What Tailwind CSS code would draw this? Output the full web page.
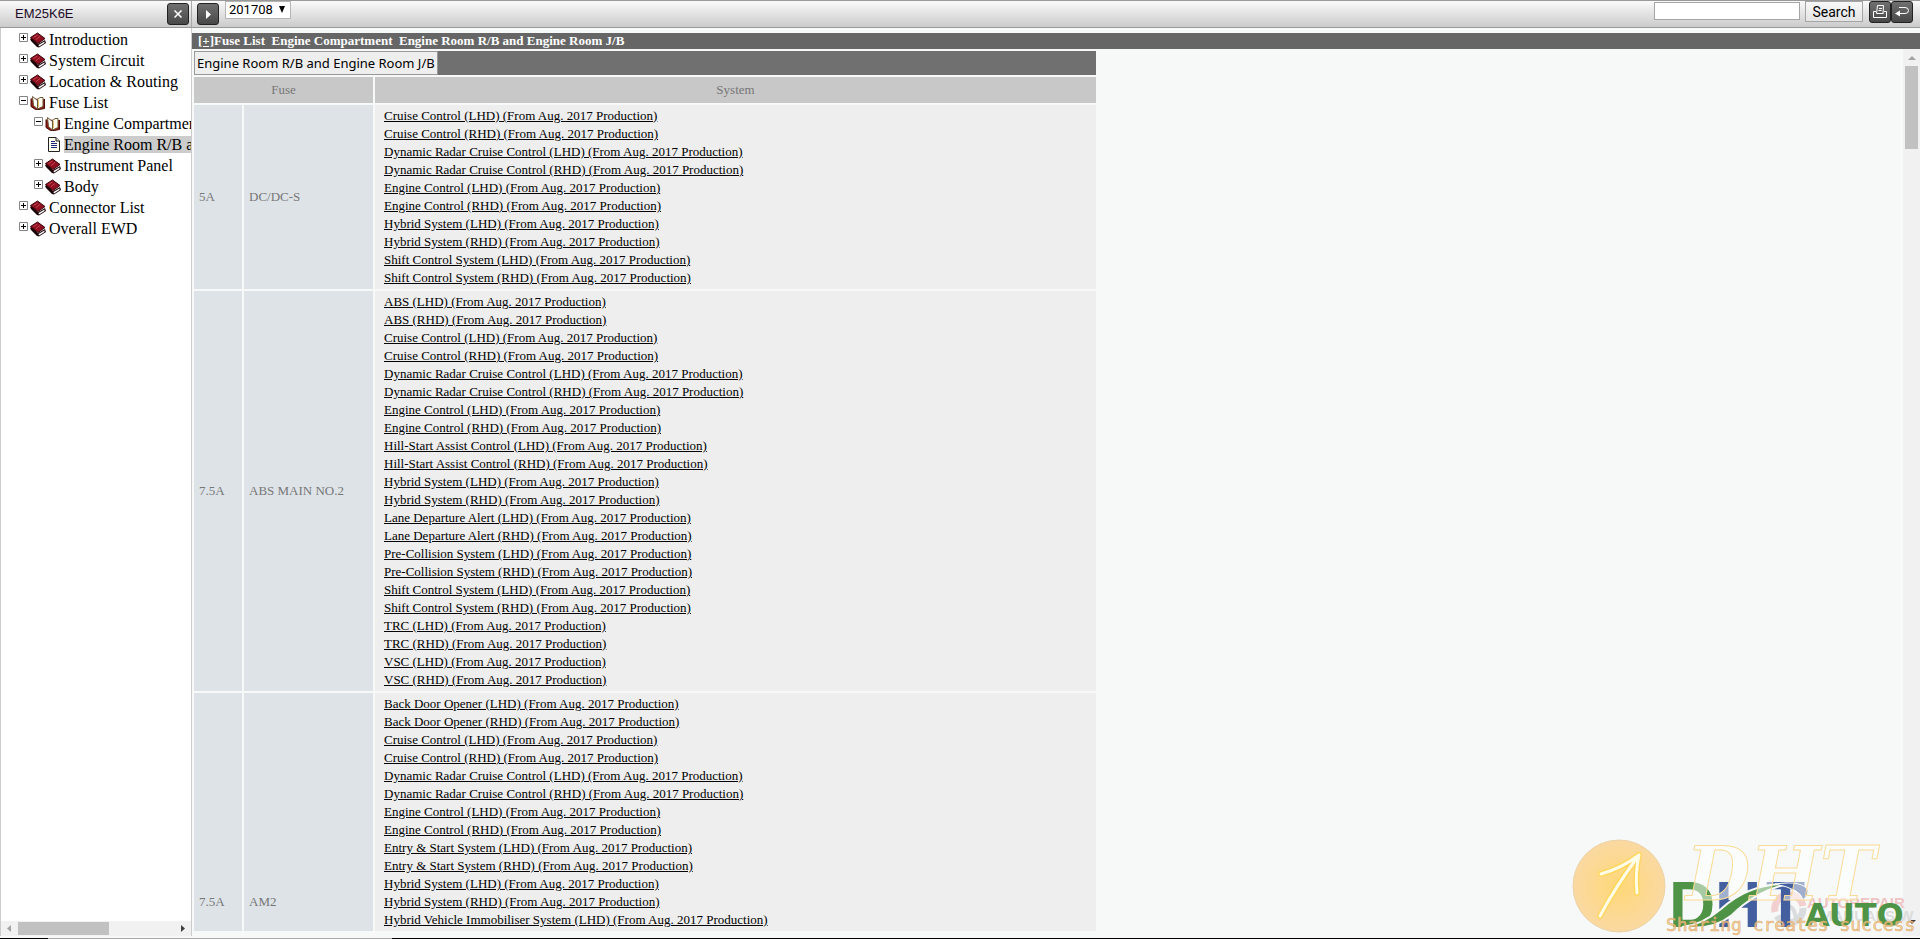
<!DOCTYPE html>
<html lang="en">
  <head>
    <meta charset="UTF-8" />
    <meta name="viewport" content="width=device-width, initial-scale=1.0" />
    <title>EM25K6E</title>
    <script src="https://cdn.jsdelivr.net/npm/@tailwindcss/browser@4"></script>
  </head>
  <body class="h-screen overflow-hidden flex flex-col bg-[#f7f9f9] text-black font-['Liberation_Serif',serif]">
    <!-- tree icons -->
    <svg class="hidden">
      <symbol id="icon-closed" viewBox="0 0 16 16">
        <path d="M0 7 L2 5.500 L8 12 L15 8 L16 11 L9 15.500 L7 15 L1 9Z" fill="#1c0508" />
        <path d="M0.500 5.500 L7.500 1 L15 6.500 L8 11.500Z" fill="#8f1020" stroke="#3a0509" />
        <path d="M3.500 5.500 L7.500 3 M6 7.500 L10 4.500" stroke="#c8454f" />
        <path d="M8.500 13 L14.500 9.500 V11 L9 14.500Z" fill="#fff" />
      </symbol>
      <symbol id="icon-open" viewBox="0 0 16 16">
        <path d="M1 3.500 V11.500 L5.500 14.500 H9 L14.500 13.500 V4" fill="#8f1a14" stroke="#4a0d0a" />
        <path d="M2.500 1.500 L3.500 10.500 L7.500 14 V5.500Z" fill="#fff" stroke="#6b5836" />
        <path d="M7.500 14 V4.500 L10 2.500 H13 V11.500Z" fill="#fffdf0" stroke="#6b5836" />
        <path d="M8.500 5 V12" stroke="#e0c070" />
      </symbol>
      <symbol id="icon-page" viewBox="0 0 12 15">
        <path d="M0.500 0.500 H8 L11.500 4 V14.500 H0.500Z" fill="#fffff0" stroke="#222" />
        <path d="M8 0.500 V4 H11.500" fill="#ddd" stroke="#222" />
        <path d="M3 4.500 H7 M3 6.500 H9 M3 8.500 H9 M3 10.500 H9" stroke="#1b2a80" />
      </symbol>
      <symbol id="icon-plus" viewBox="0 0 9 9">
        <path d="M0.500 0.500 H8.500 V8.500 H0.500Z" fill="#fff" stroke="#848484" />
        <path d="M2 4.500 H7 M4.500 2 V7" stroke="#000" />
      </symbol>
      <symbol id="icon-minus" viewBox="0 0 9 9">
        <path d="M0.500 0.500 H8.500 V8.500 H0.500Z" fill="#fff" stroke="#848484" />
        <path d="M2 4.500 H7" stroke="#000" />
      </symbol>
    </svg>

    <!-- toolbar -->
    <header class="h-7 shrink-0 flex border-t border-b border-[#999] bg-linear-to-b from-[#fafafa] to-[#cbcbcb]">
      <div class="w-48 shrink-0 flex items-start justify-between pl-[15px] pr-0.5 pt-0.5 border-r border-[#aaa]">
        <span class="text-[13px] leading-[22px] text-[#1c0a28] font-['Liberation_Sans',sans-serif]">EM25K6E</span>
        <button aria-label="Close" class="size-[22px] grid place-items-center rounded-[3px] border border-[#222] bg-linear-to-b from-[#707070] to-[#484848]">
          <svg class="size-2" viewBox="0 0 8 8"><path d="M0.500 0.500 L7.500 7.500 M7.500 0.500 L0.500 7.500" stroke="#fff" stroke-width="1.500" /></svg>
        </button>
      </div>
      <div class="grow flex items-start pl-[5px] pr-[7px]">
        <button aria-label="Next" class="mt-0.5 size-[22px] grid place-items-center rounded-[3px] border border-[#222] bg-linear-to-b from-[#707070] to-[#484848]">
          <svg class="w-[5px] h-[9px]" viewBox="0 0 5 9"><path d="M0 0 L5 4.500 L0 9Z" fill="#fff" /></svg>
        </button>
        <div class="relative ml-1.5">
          <select aria-label="Production date" class="block appearance-none w-[66px] h-[18px] pl-[3px] border border-[#b5b5b5] bg-white text-[13px] leading-4 font-[Roboto,sans-serif]">
            <option>201708</option>
          </select>
          <svg class="absolute right-[6px] top-[5px] w-[6px] h-[7px] pointer-events-none" viewBox="0 0 6 7"><path d="M0 0 H6 L3 7Z" fill="#000" /></svg>
        </div>
        <form class="ml-auto flex items-start">
          <input type="text" aria-label="Search text" class="mt-px w-[146px] h-[18px] px-1 border border-[#a5a5a5] bg-white text-[13px]" />
          <button type="button" class="ml-[5px] w-[58px] h-[21px] border border-[#a5a5a5] bg-linear-to-b from-[#f8f8f8] to-[#e4e4e4] text-sm leading-[18px] font-[Roboto,sans-serif]">Search</button>
        </form>
        <button aria-label="Print" class="ml-1.5 size-[22px] grid place-items-center rounded-[3px] border border-[#222] bg-linear-to-b from-[#707070] to-[#484848]">
          <svg class="w-3.5 h-3.5" viewBox="0 0 14 14" fill="none" stroke="#fff"><path d="M3.500 8.500 L4.500 0.500 H10.500 L10 8.500 M3.500 8.500 H10.500 M3 6.500 H0.500 V12.500 H13.500 V6.500 H11 M6 3.500 H9 M5.500 5.500 H8.500" /></svg>
        </button>
        <button aria-label="Back" class="size-[22px] grid place-items-center rounded-[3px] border border-[#222] bg-linear-to-b from-[#707070] to-[#484848]">
          <svg class="w-3.5 h-2.5" viewBox="0 0 14 10" fill="none" stroke="#fff"><path d="M4 0.500 H10 Q13.500 0.500 13.500 3.500 Q13.500 6.500 10 6.500 H3" /><path d="M0 6.500 L5 3.500 V9.500Z" fill="#fff" stroke="none" /></svg>
        </button>
      </div>
    </header>

    <div class="grow min-h-0 flex">
      <!-- contents tree -->
      <nav class="w-48 shrink-0 flex flex-col bg-white border-x border-[#ccc]">
        <ul id="tree" class="grow overflow-hidden pt-px text-base leading-[21px] whitespace-nowrap"></ul>
        <div class="h-[15px] shrink-0 flex items-center bg-[#f1f1f1] px-1.5">
          <svg class="w-1 h-[7px] shrink-0" viewBox="0 0 4 7"><path d="M4 0 V7 L0 3.500Z" fill="#a3a3a3" /></svg>
          <div class="ml-[7px] w-[91px] h-[13px] bg-[#c1c1c1]"></div>
          <svg class="ml-auto w-1 h-[7px] shrink-0" viewBox="0 0 4 7"><path d="M0 0 V7 L4 3.500Z" fill="#404040" /></svg>
        </div>
      </nav>

      <!-- fuse list -->
      <main class="grow min-w-0 flex flex-col pt-[5px]">
        <h1 class="h-4 shrink-0 pl-1.5 bg-[#666] text-white text-[13px] leading-4 font-bold whitespace-pre"><a href="#" class="underline">[+]</a>Fuse List  Engine Compartment  Engine Room R/B and Engine Room J/B</h1>
        <div class="grow min-h-0 flex">
          <div class="grow overflow-hidden mb-[5px]">
            <table class="table-fixed w-[906px] border-separate border-spacing-0.5 text-[13px] leading-[18px] text-[#777]">
              <colgroup>
                <col class="w-12" />
                <col class="w-[129px]" />
                <col />
              </colgroup>
              <thead>
                <tr>
                  <td colspan="3" class="h-6 p-0 bg-[#707070]">
                    <button class="block h-6 px-0.5 border border-[#999] bg-[#eee] text-black text-[13px] leading-5 font-['Noto_Sans',sans-serif] whitespace-nowrap">Engine Room R/B and Engine Room J/B</button>
                  </td>
                </tr>
                <tr class="bg-[#c8c8c8]">
                  <th colspan="2" class="h-[26px] p-0 font-normal">Fuse</th>
                  <th class="h-[26px] p-0 font-normal">System</th>
                </tr>
              </thead>
              <tbody id="fuses"></tbody>
            </table>
          </div>
          <div class="w-[17px] shrink-0 flex flex-col items-center bg-[#f1f1f1] pt-[7px] pb-3">
            <svg class="w-2 h-1 shrink-0" viewBox="0 0 8 4"><path d="M0 4 H8 L4 0Z" fill="#a3a3a3" /></svg>
            <div class="mt-1.5 w-[13px] h-[83px] bg-[#c1c1c1]"></div>
            <svg class="mt-auto w-2 h-1 shrink-0" viewBox="0 0 8 4"><path d="M0 0 H8 L4 4Z" fill="#404040" /></svg>
          </div>
        </div>
      </main>
    </div>

    <footer class="h-[3px] shrink-0 flex items-end bg-[#f7f9f9]">
      <div class="w-12 h-px bg-black"></div>
      <div class="w-[344px] h-px bg-[#aaa]"></div>
      <div class="grow h-px bg-black"></div>
    </footer>

    <!-- watermark over the page corner -->
    <svg class="absolute right-0 bottom-0.5 w-[350px] h-[98px] pointer-events-none" viewBox="0 0 350 98">
      <defs>
        <radialGradient id="sun">
          <stop offset="0" stop-color="#ffd877" />
          <stop offset="1" stop-color="#fad9a2" />
        </radialGradient>
      </defs>
      <circle cx="49" cy="47" r="46" fill="url(#sun)" stroke="#ecd3a8" stroke-width="1" />
      <g fill="none" stroke-linecap="round" stroke-linejoin="round">
        <path d="M30 77 Q44 50 69 16 M31 35 Q52 29 69 16 Q65 34 67 54" stroke="#ffd640" stroke-width="6" opacity="0.600" />
        <path d="M30 77 Q44 50 69 16 M31 35 Q52 29 69 16 Q65 34 67 54" stroke="#fffde8" stroke-width="3" />
      </g>
      <g fill="none" stroke-width="7" opacity="0.600">
        <path d="M205 73 A14 14 0 0 1 233 67" stroke="#efb5b5" />
        <path d="M233 69 A14 14 0 0 1 207 77" stroke="#c8c8cc" />
        <path d="M214 68 Q224 64 226 80" stroke="#c8c8cc" stroke-width="4" />
      </g>
      <g class="font-['Liberation_Sans',sans-serif] font-bold">
        <text x="237" y="69" font-size="15" fill="#efc4c4">AUTOREPAIR</text>
        <text x="250" y="82" font-size="15" fill="#dcdcdc">MANUALS.W</text>
        <g font-size="64">
          <text x="99" y="88" fill="#4f9446">D</text>
          <text x="145" y="88" fill="#435f9f">H</text>
          <text x="196" y="88" fill="#435f9f">T</text>
        </g>
      </g>
      <path d="M112 88 Q132 86 151 70 Q180 44 218 45 Q186 52 162 76 Q142 92 112 88Z" fill="#4f9446" stroke="#f7f9f9" stroke-width="2" />
      <path d="M205 45 Q234 41 238 52 Q237 58 233 61 Q231 50 205 45Z" fill="#435f9f" stroke="#f7f9f9" stroke-width="1" />
      <text x="235" y="87" font-size="32" fill="#4f9446" class="font-['DejaVu_Sans',sans-serif] font-bold">AUTO</text>
      <text x="116" y="61" font-size="74" fill="#fff" fill-opacity="0.500" stroke="#f9dc98" stroke-width="1" class="font-['DejaVu_Serif',serif] font-bold italic">DHT</text>
      <text x="96" y="92" font-size="18" fill="#f5c78c" fill-opacity="0.800" stroke="#dca868" stroke-width="0.500" class="font-['DejaVu_Sans_Mono',monospace]">Sharing creates success</text>
    </svg>

    <script>
      const tree = [
        { label: "Introduction", icon: "closed" },
        { label: "System Circuit", icon: "closed" },
        { label: "Location & Routing", icon: "closed" },
        { label: "Fuse List", icon: "open" },
        { label: "Engine Compartment", icon: "open", nested: true },
        { label: "Engine Room R/B and Engine Room J/B", icon: "page", nested: true },
        { label: "Instrument Panel", icon: "closed", nested: true },
        { label: "Body", icon: "closed", nested: true },
        { label: "Connector List", icon: "closed" },
        { label: "Overall EWD", icon: "closed" },
      ];

      document.getElementById("tree").innerHTML = tree
        .map(({ label, icon, nested }) => {
          const text = label.replace("&", "&amp;");
          if (icon === "page") {
            return `
            <li class="h-[21px] flex items-center pl-[47px]">
              <svg class="w-3 h-[15px] mr-1 shrink-0"><use href="#icon-page" /></svg>
              <a href="#" class="leading-[17px] bg-[#ccc]">${text}</a>
            </li>`;
          }
          const sign = icon === "open" ? "minus" : "plus";
          return `
            <li class="h-[21px] flex items-center ${nested ? "pl-[33px]" : "pl-[18px]"}">
              <svg class="size-[9px] mr-0.5 mb-1 shrink-0"><use href="#icon-${sign}" /></svg>
              <svg class="size-4 mr-[3px] shrink-0"><use href="#icon-${icon}" /></svg>
              <a href="#">${text}</a>
            </li>`;
        })
        .join("");

      // every system is listed once for each side of the steering wheel
      const fuses = [
        {
          amp: "5A",
          name: "DC/DC-S",
          systems: ["Cruise Control", "Dynamic Radar Cruise Control", "Engine Control", "Hybrid System", "Shift Control System"],
        },
        {
          amp: "7.5A",
          name: "ABS MAIN NO.2",
          systems: ["ABS", "Cruise Control", "Dynamic Radar Cruise Control", "Engine Control", "Hill-Start Assist Control", "Hybrid System", "Lane Departure Alert", "Pre-Collision System", "Shift Control System", "TRC", "VSC"],
        },
        {
          amp: "7.5A",
          name: "AM2",
          systems: ["Back Door Opener", "Cruise Control", "Dynamic Radar Cruise Control", "Engine Control", "Entry &amp; Start System", "Hybrid System", "Hybrid Vehicle Immobiliser System"],
        },
      ];

      document.getElementById("fuses").innerHTML = fuses
        .map(({ amp, name, systems }) => {
          const links = systems
            .flatMap((s) => ["LHD", "RHD"].map((side) => `${s} (${side}) (From Aug. 2017 Production)`))
            .map((t) => `<li><a href="#" class="underline">${t}</a></li>`)
            .join("");
          return `
            <tr>
              <td class="px-[5px] py-0 bg-[#dee3e7]">${amp}</td>
              <td class="px-[5px] py-0 bg-[#dee3e7]">${name}</td>
              <td class="px-[9px] py-0.5 bg-[#eee] text-black align-top ${name === "AM2" ? "h-[418px]" : ""}"><ul>${links}</ul></td>
            </tr>`;
        })
        .join("");
    </script>
  </body>
</html>
